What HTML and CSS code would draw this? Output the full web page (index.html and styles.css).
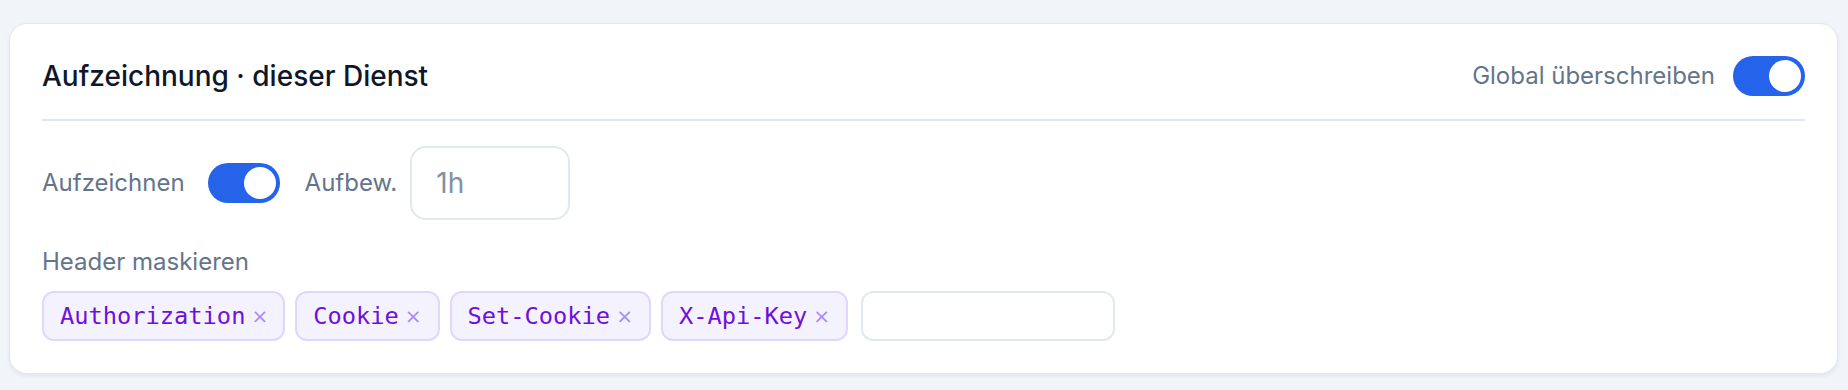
FILE: index.html
```html
<!DOCTYPE html>
<html lang="de">
<head>
<meta charset="utf-8">
<title>Aufzeichnung</title>
<link rel="stylesheet" href="styles.css">
</head>
<body>
<section class="card">
  <header class="card-head">
    <h2 class="title">Aufzeichnung · dieser Dienst</h2>
    <div class="head-right">
      <span class="label">Global überschreiben</span>
      <span class="toggle on"><span class="knob"></span></span>
    </div>
  </header>
  <div class="row">
    <div class="group">
      <span class="label">Aufzeichnen</span>
      <span class="toggle on"><span class="knob"></span></span>
    </div>
    <div class="group tight">
      <span class="label">Aufbew.</span>
      <input class="field" type="text" placeholder="1h">
    </div>
  </div>
  <div class="label block">Header maskieren</div>
  <div class="chips">
    <span class="chip"><span class="chip-text">Authorization</span><span class="chip-x">×</span></span>
    <span class="chip"><span class="chip-text">Cookie</span><span class="chip-x">×</span></span>
    <span class="chip"><span class="chip-text">Set-Cookie</span><span class="chip-x">×</span></span>
    <span class="chip"><span class="chip-text">X-Api-Key</span><span class="chip-x">×</span></span>
    <input class="chip-input" type="text">
  </div>
</section>
</body>
</html>
```
FILE: styles.css
```css
* { box-sizing: border-box; }
html, body { margin: 0; }
body {
  background: #f1f4f9;
  padding: 23px 10px 16px 9px;
  font-family: Inter, "Noto Sans", sans-serif;
}
.card {
  background: #fff;
  border: 1px solid #e2e8f0;
  border-radius: 18px;
  padding: 32px;
  box-shadow: 0 2px 4px rgba(15, 23, 42, 0.07);
}
.card-head {
  display: flex;
  align-items: center;
  justify-content: space-between;
  height: 65px;
  padding-bottom: 23px;
  border-bottom: 2px solid #e2e8f0;
}
.title {
  margin: 0;
  font-size: 28px;
  font-weight: 500;
  color: #0f172a;
  line-height: 40px;
}
.head-right {
  display: flex;
  align-items: center;
  gap: 18px;
}
.label {
  font-size: 24px;
  line-height: 30px;
  color: #64748b;
}
.toggle {
  display: flex;
  justify-content: flex-end;
  align-items: center;
  width: 72px;
  height: 40px;
  padding: 4px;
  border-radius: 20px;
  background: #2563eb;
}
.knob {
  width: 32px;
  height: 32px;
  border-radius: 50%;
  background: #fff;
}
.row {
  display: flex;
  align-items: center;
  gap: 25px;
  margin-top: 25px;
}
.group {
  display: flex;
  align-items: center;
  gap: 23px;
}
.group.tight { gap: 13px; }
.field {
  width: 160px;
  height: 74px;
  border: 2px solid #e2e8f0;
  border-radius: 16px;
  padding: 0 0 0 24px;
  font-family: Inter, sans-serif;
  font-size: 28px;
  color: #334155;
  outline: none;
}
.field::placeholder { color: #8391a5; }
.block {
  display: block;
  margin-top: 27px;
}
.chips {
  display: flex;
  align-items: center;
  gap: 10px;
  margin-top: 14px;
}
.chip {
  display: flex;
  align-items: center;
  height: 50px;
  padding: 0 16px 0 16px;
  border: 2px solid #e2d6fe;
  border-radius: 12px;
  background: #f5f2ff;
}
.chip:first-child { padding-right: 15px; }
.chip-text {
  font-family: "DejaVu Sans Mono", "Liberation Mono", monospace;
  font-size: 23.7px;
  color: #6d10d9;
}
.chip-x {
  margin-left: 6px;
  font-family: "DejaVu Sans", sans-serif;
  font-size: 20px;
  color: #a78bfa;
}
.chip-input {
  width: 254px;
  height: 50px;
  margin-left: 3px;
  border: 2px solid #e2e8f0;
  border-radius: 12px;
  background: #fff;
  outline: none;
}
```
